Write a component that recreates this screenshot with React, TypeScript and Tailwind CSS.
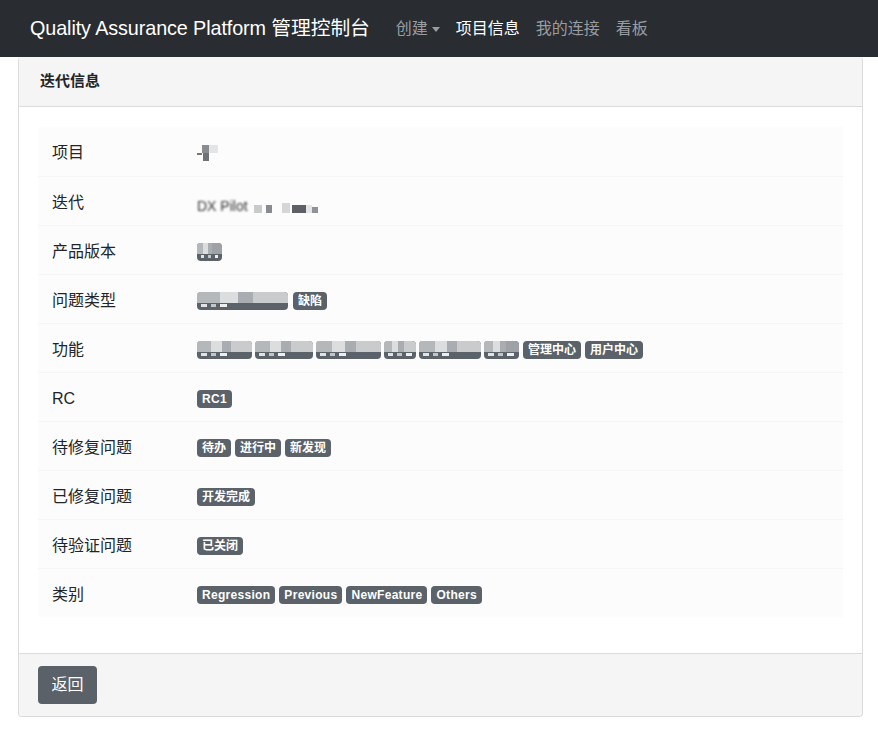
import React from 'react';

const font = { fontFamily: '"Liberation Sans", "Noto Sans CJK SC", sans-serif' };

function Badge({ children, latin }: { children: React.ReactNode; latin?: boolean }) {
  return (
    <span
      className={`inline-flex h-[18px] items-center rounded-[4px] bg-[#5b6269] px-[5px] text-[12px] font-bold leading-none text-white ${latin ? 'tracking-[0.3px]' : ''}`}
    >
      {children}
    </span>
  );
}

// redacted badge: mosaic over a dark pill
function Masked({ w, tone = 'light' }: { w: number; tone?: 'light' | 'dark' }) {
  const top = tone === 'light' ? '#c9cbcd' : '#9ea2a6';
  return (
    <span
      className="inline-block h-[18px] overflow-hidden rounded-[4px] bg-[#5b6269]"
      style={{ width: w }}
    >
      <span className="flex h-[11px] w-full" style={{ background: top }}>
        <span className="h-full w-1/4 bg-[#b5b8bb]" />
        <span className="h-full w-1/5 bg-[#dcdddf]" />
        <span className="h-full w-1/6 bg-[#a9adb1]" />
      </span>
      <span className="flex h-[4px] w-full gap-[4px] px-[4px] pt-[1px]">
        <span className="h-[3px] w-[6px] bg-[#e2e3e4]" />
        <span className="h-[3px] w-[5px] bg-[#c4c7ca]" />
        <span className="h-[3px] w-[7px] bg-[#eeeeef]" />
      </span>
    </span>
  );
}

const rows: { label: string; value: React.ReactNode }[] = [
  {
    label: '项目',
    value: (
      <span className="flex items-center">
        <span className="mt-[2px] h-[2px] w-[5px] bg-[#777]" />
        <span className="flex h-[16px] w-[16px] flex-col">
          <span className="flex h-[8px]">
            <span className="w-[7px] bg-[#8a8d90]" />
            <span className="w-[9px] bg-[#e4e5e6]" />
          </span>
          <span className="ml-[1px] h-[8px] w-[6px] bg-[#6f7377]" />
        </span>
      </span>
    ),
  },
  {
    label: '迭代',
    value: (
      <span className="flex h-[24px] items-end pb-[2px]">
        <span className="text-[14px] leading-none text-[#333] blur-[1px]">DX Pilot</span>
        <span className="ml-[6px] h-[8px] w-[8px] bg-[#c8cacc]" />
        <span className="ml-[4px] h-[8px] w-[6px] bg-[#888b8f]" />
        <span className="ml-[10px] h-[10px] w-[8px] bg-[#d4d6d8]" />
        <span className="ml-[2px] h-[8px] w-[14px] self-end bg-[#5d6166]" />
        <span className="h-[8px] w-[6px] bg-[#e4e5e6]" />
        <span className="h-[6px] w-[6px] bg-[#8f9397]" />
      </span>
    ),
  },
  { label: '产品版本', value: <Masked w={25} tone="dark" /> },
  {
    label: '问题类型',
    value: (
      <span className="flex gap-[5px]">
        <Masked w={91} />
        <Badge>缺陷</Badge>
      </span>
    ),
  },
  {
    label: '功能',
    value: (
      <span className="flex gap-[3px]">
        <Masked w={55} />
        <Masked w={58} />
        <Masked w={65} />
        <Masked w={32} />
        <Masked w={62} />
        <Masked w={35} tone="dark" />
        <span className="ml-[1px] flex gap-[4px]">
          <Badge>管理中心</Badge>
          <Badge>用户中心</Badge>
        </span>
      </span>
    ),
  },
  { label: 'RC', value: <Badge latin>RC1</Badge> },
  {
    label: '待修复问题',
    value: (
      <span className="flex gap-[4px]">
        <Badge>待办</Badge>
        <Badge>进行中</Badge>
        <Badge>新发现</Badge>
      </span>
    ),
  },
  { label: '已修复问题', value: <Badge>开发完成</Badge> },
  { label: '待验证问题', value: <Badge>已关闭</Badge> },
  {
    label: '类别',
    value: (
      <span className="flex gap-[4px]">
        <Badge latin>Regression</Badge>
        <Badge latin>Previous</Badge>
        <Badge latin>NewFeature</Badge>
        <Badge latin>Others</Badge>
      </span>
    ),
  },
];

export default function App() {
  return (
    <div className="min-h-screen bg-white text-[#212529]" style={font}>
      <nav className="flex h-[57px] items-center bg-[#292d32] pl-[30px]">
        <span className="mr-[18px] text-[19.8px] tracking-[-0.1px] text-white">Quality Assurance Platform 管理控制台</span>
        <div className="flex items-center text-[16px]">
          <span className="flex items-center px-[8px] text-[#999ca0]">
            创建
            <span className="ml-[4px] mt-[1px] h-0 w-0 border-x-[4.5px] border-t-[5px] border-x-transparent border-t-[#999ca0]" />
          </span>
          <span className="px-[8px] text-white">项目信息</span>
          <span className="px-[8px] text-[#999ca0]">我的连接</span>
          <span className="px-[8px] text-[#999ca0]">看板</span>
        </div>
      </nav>

      <div className="mx-[18px] w-[845px] overflow-hidden rounded-[4px] border border-t-0 border-[#dcdcdc]">
        <div className="flex h-[50px] items-center border-b border-[#dcdcdc] bg-[#f5f5f5] px-[21px] text-[15px] font-bold">
          迭代信息
        </div>

        <div className="px-[19px] pb-[20px] pt-[20px]">
          <div className="mb-[16px] bg-[#fcfcfc]">
            {rows.map((r, i) => (
              <div
                key={r.label}
                className={`flex h-[49px] items-center pt-[3px] ${i > 0 ? 'border-t border-[#f6f6f6]' : ''}`}
              >
                <div className="w-[159px] shrink-0 pl-[14px] text-[16px]">{r.label}</div>
                <div className="flex items-center">{r.value}</div>
              </div>
            ))}
          </div>
        </div>

        <div className="flex h-[63px] items-center border-t border-[#dcdcdc] bg-[#f5f5f5] px-[19px]">
          <button className="h-[38px] w-[59px] rounded-[4px] bg-[#5a6169] text-[16px] text-white">返回</button>
        </div>
      </div>
    </div>
  );
}
